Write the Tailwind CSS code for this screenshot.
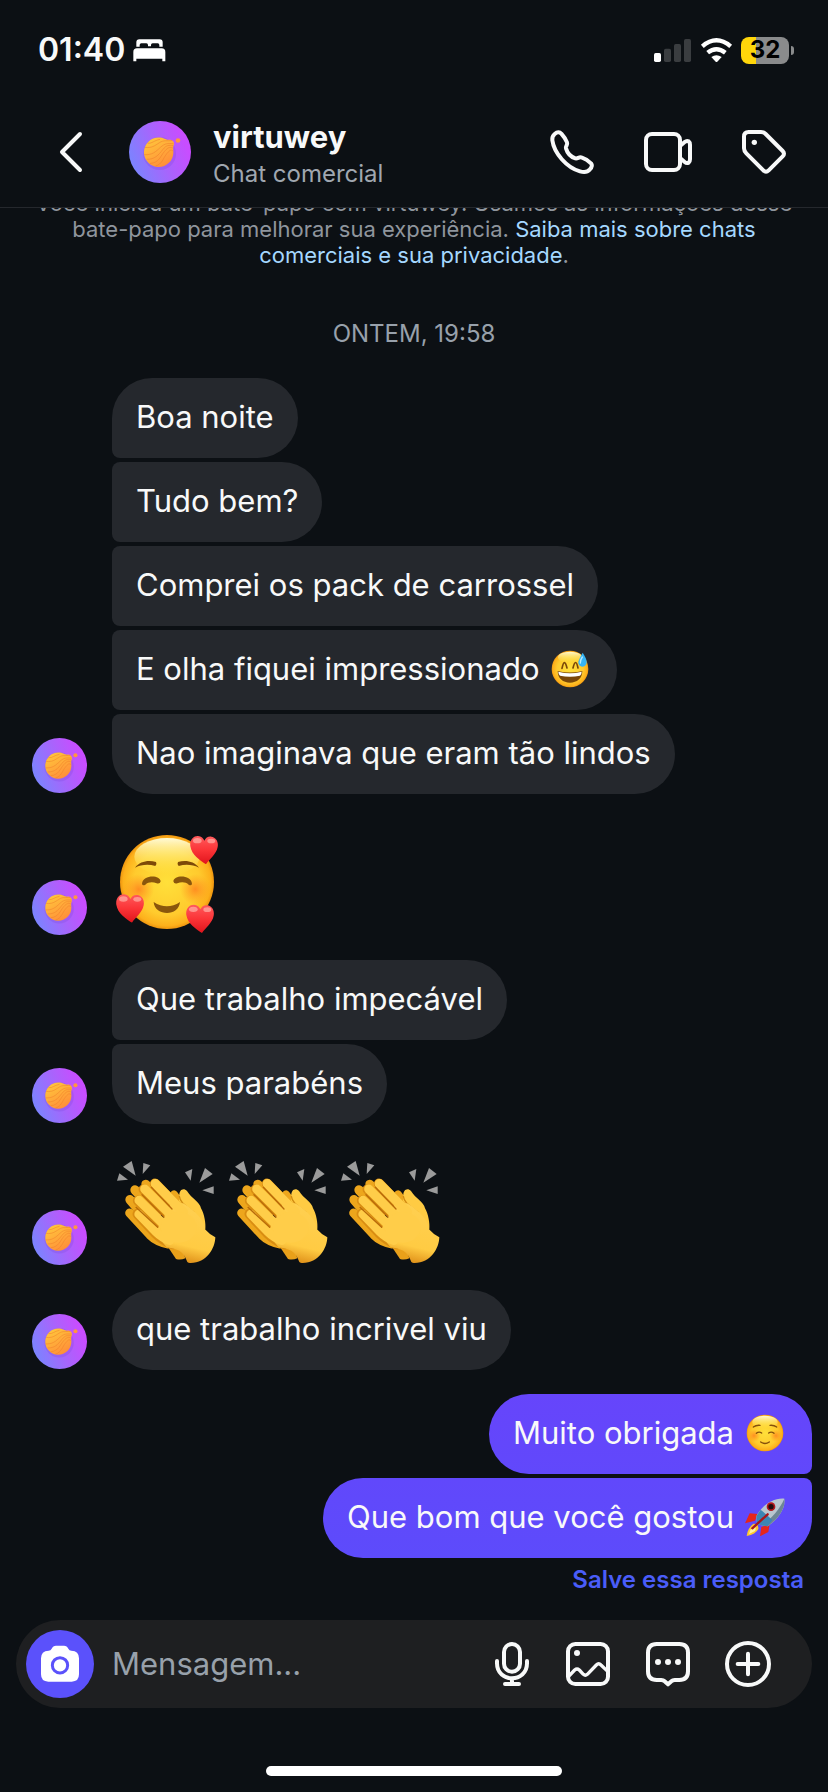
<!DOCTYPE html>
<html lang="pt-BR">
<head>
    <meta charset="UTF-8">
    <meta name="viewport" content="width=device-width, initial-scale=1.0">
    <title>virtuwey - Chat comercial</title>
    <script src="https://cdn.jsdelivr.net/npm/@tailwindcss/browser@4"></script>
</head>
<body class="flex flex-col min-h-screen bg-[#0c1014] text-[#f8f9f9] font-['Inter','Liberation_Sans',sans-serif]">

    <!-- Shared drawings -->
    <svg class="absolute size-0" aria-hidden="true">
        <defs>
            <linearGradient id="avatarBg" x1="0" y1="0.7" x2="1" y2="0.3">
                <stop offset="0" stop-color="#7886ff"/>
                <stop offset="0.5" stop-color="#a765fc"/>
                <stop offset="0.9" stop-color="#c84dff"/>
            </linearGradient>
            <linearGradient id="ball" x1="0.2" y1="0" x2="0.8" y2="1">
                <stop offset="0" stop-color="#ffc83c"/>
                <stop offset="1" stop-color="#ff8a38"/>
            </linearGradient>
            <radialGradient id="face" cx="0.5" cy="0.5" r="0.5">
                <stop offset="0" stop-color="#ffe03a"/>
                <stop offset="0.7" stop-color="#ffcb2e"/>
                <stop offset="0.93" stop-color="#fdb01b"/>
                <stop offset="1" stop-color="#ee950f"/>
            </radialGradient>
            <linearGradient id="shine" x1="0" y1="0" x2="0" y2="1">
                <stop offset="0" stop-color="#fffbd8"/>
                <stop offset="1" stop-color="#fff04a" stop-opacity="0"/>
            </linearGradient>
            <radialGradient id="blush">
                <stop offset="0" stop-color="#ff7a1c" stop-opacity="0.75"/>
                <stop offset="1" stop-color="#ff8a1c" stop-opacity="0"/>
            </radialGradient>
            <linearGradient id="heartFill" x1="0" y1="0" x2="0" y2="1">
                <stop offset="0" stop-color="#ff5a5c"/>
                <stop offset="0.5" stop-color="#fb3437"/>
                <stop offset="1" stop-color="#e0141c"/>
            </linearGradient>
            <linearGradient id="skin" gradientUnits="userSpaceOnUse" x1="270" y1="180" x2="225" y2="370">
                <stop offset="0" stop-color="#ffd052"/>
                <stop offset="0.7" stop-color="#ffcb43"/>
                <stop offset="1" stop-color="#d98410"/>
            </linearGradient>
        </defs>

        <symbol id="avatar" viewBox="99 117 162 162">
            <circle cx="180" cy="198" r="81" fill="url(#avatarBg)"/>
            <circle cx="179" cy="202" r="43" fill="#7a45d8" opacity="0.25"/>
            <path d="M177 160C190 160 194 166 203 166C212 165 219 172 216 180C213 187 215 191 215 199A38.500 38.500 0 1 1 177 160Z" fill="url(#ball)"/>
            <g fill="none" stroke="#ef7f2a" stroke-width="1.500">
                <path d="M141 186C158 188 166 182 178 174S197 170 212 168"/>
                <path d="M139 205C160 206 168 198 181 186S200 176 215 176"/>
                <path d="M145 217C166 218 176 206 187 192S203 181 214 181"/>
                <path d="M154 228C178 226 181 209 192 196S207 186 213 187"/>
                <path d="M168 235C186 230 188 214 198 202S209 193 214 195"/>
                <path d="M148 175C160 176 164 168 180 165"/>
            </g>
            <circle cx="227" cy="168" r="6" fill="#ff9540"/>
        </symbol>

        <symbol id="heart" viewBox="0 0 84 86">
            <path d="M48 86C30 74 5 58 1 32C-2 12 12 0 24 1C34 2 40 8 43 15C47 7 54 2 64 3C78 5 86 18 83 34C79 56 58 70 48 86Z" fill="url(#heartFill)"/>
            <ellipse cx="22" cy="15" rx="13" ry="8" fill="#ffb0a8" opacity="0.7"/>
            <ellipse cx="64" cy="16" rx="12" ry="7" fill="#ffb0a8" opacity="0.7"/>
        </symbol>

        <symbol id="clap" viewBox="36 24 336 354">
            <g fill="#9b9b9b">
                <path d="M58 100L84 119L51 122Z"/>
                <path d="M69 80L95 63L107 107Z"/>
                <path d="M130 69L151 76L128 102Z"/>
                <path d="M255 97L277 87L272 122Z"/>
                <path d="M315 84L338 102L298 128Z"/>
                <path d="M307 151L341 139L341 162Z"/>
            </g>
            <!-- hand behind -->
            <g stroke="#eda61c" stroke-linecap="round" fill="none">
                <path d="M137 132L200 190" stroke-width="26"/>
                <path d="M105 150L170 220" stroke-width="28"/>
                <path d="M90 179L150 250" stroke-width="28"/>
                <path d="M89 219L150 285Q170 305 205 312" stroke-width="27"/>
                <path d="M222 162L250 200" stroke-width="22"/>
            </g>
            <path d="M200 315L228 357Q242 361 256 355L245 320Z" fill="#e9a01a"/>
            <path d="M238 170C236 150 250 142 261 153C274 175 300 186 303 205C313 222 318 250 316 268L270 300L235 200Z" fill="#ffcb43"/>
            <path d="M238 168C240 190 262 200 282 217" fill="none" stroke="#d08a12" stroke-width="4"/>
            <!-- hand in front -->
            <g stroke="#d98d12" stroke-linecap="round" fill="none">
                <path d="M113 222L165 278Q190 302 218 312" stroke-width="31"/>
                <path d="M114 182L182 250" stroke-width="31"/>
                <path d="M131 148L205 222" stroke-width="31"/>
                <path d="M165 131L230 198" stroke-width="31"/>
            </g>
            <path d="M214 190L250 190C285 212 312 240 315 268Q328 283 346 292C345 325 320 369 272 369Q266 370 262 366Q254 342 238 332Q222 324 200 322L165 280Z" fill="url(#skin)"/>
            <g stroke="#ffcd49" stroke-linecap="round" fill="none">
                <path d="M116 222L168 276Q186 294 210 302" stroke-width="26"/>
                <path d="M117 181L200 262" stroke-width="27"/>
                <path d="M134 147L225 237" stroke-width="27"/>
                <path d="M166 131L250 216" stroke-width="28"/>
            </g>
            <ellipse cx="236" cy="262" rx="54" ry="46" fill="#ffcd49"/>
            <g stroke="#b86a0a" stroke-width="4" stroke-linecap="round" fill="none">
                <path d="M154 142L216 207"/>
                <path d="M126 164L192 231"/>
                <path d="M108 202L173 262"/>
            </g>
        </symbol>
    </svg>

    <!-- Status bar -->
    <div class="flex items-center justify-between h-24 pt-1 pl-[38px] pr-[34px]">
        <div class="flex items-center gap-2">
            <span class="text-[32px] font-semibold">01:40</span>
            <svg class="w-[33px] h-[23px]" viewBox="401 116 99 69" fill="#fff" aria-label="Sono">
                <path d="M411 139V126Q411 117 420 117H481Q490 117 490 126V139H480V134Q480 129 475 129H460Q455 129 455 134V138H446V134Q446 129 441 129H426Q421 129 421 134V139Z"/>
                <path d="M402 183V155Q402 144 413 144H487Q498 144 498 155V183H489V175H411V183Z"/>
            </svg>
        </div>
        <div class="flex items-center gap-2">
            <svg class="w-[39px] h-[27px]" viewBox="714 108 117 81" fill="#3a3d40" aria-label="Sinal">
                <rect x="717" y="156" width="21" height="27" rx="5" fill="#fff"/>
                <rect x="747" y="143" width="21" height="40" rx="5"/>
                <rect x="777" y="129" width="21" height="54" rx="5"/>
                <rect x="807" y="114" width="21" height="69" rx="5"/>
            </svg>
            <svg class="w-[33px] h-[27px]" viewBox="855 108 99 81" aria-label="Wi-Fi">
                <g fill="none" stroke="#fff" stroke-width="13">
                    <path d="M862 136Q904 100 947 136"/>
                    <path d="M878 155Q904 134 931 155"/>
                </g>
                <path d="M889 168Q904 157 920 168L907 182Q904 184 902 182Z" fill="#fff"/>
            </svg>
            <div class="flex items-center gap-0.5">
                <span class="flex items-center justify-center w-12 h-[27px] rounded-lg bg-linear-to-r from-[#ffd60a] from-[31%] to-[#8a8b8c] to-[31%] text-black text-2xl font-bold">32</span>
                <span class="w-[3px] h-[9px] rounded-r-full bg-[#8a8b8c]"></span>
            </div>
        </div>
    </div>

    <!-- Chat header -->
    <header class="flex items-center h-28 pl-[47px] pr-10 border-b border-[#25282d]">
        <button type="button" aria-label="Voltar" class="mr-[34px]">
            <svg class="size-12" viewBox="141 384 144 144" fill="none" stroke="#f8f9f9" stroke-width="12" stroke-linecap="round" stroke-linejoin="round">
                <path d="M240 402L186 456L240 510"/>
            </svg>
        </button>
        <svg class="size-[62px] mr-[22px]" role="img" aria-label="virtuwey"><use href="#avatar"/></svg>
        <div class="flex-1 min-w-0 pt-1">
            <h1 class="text-[31px] leading-10 font-bold">virtuwey</h1>
            <p class="text-2xl leading-[34px] text-[#a0a7b0]">Chat comercial</p>
        </div>
        <div class="flex gap-12">
            <button type="button" aria-label="Ligar">
                <svg class="size-12" viewBox="396 383 144 144" fill="none" stroke="#f8f9f9" stroke-width="12" stroke-linejoin="round">
                    <path d="M416 401C424 394 431 394 436 400C444 409 450 418 453 426C456 434 448 436 450 444C454 458 466 470 478 474C486 476 489 468 498 472C508 475 517 481 525 489C530 495 528 501 521 508C514 516 503 516 492 513C452 502 414 458 409 420C408 412 410 406 416 401Z"/>
                </svg>
            </button>
            <button type="button" aria-label="Chamada de vídeo">
                <svg class="size-12" viewBox="684 384 144 144" fill="none" stroke="#f8f9f9" stroke-width="12" stroke-linejoin="round">
                    <rect x="690" y="402" width="102" height="108" rx="18"/>
                    <path d="M793 437L806 426Q812 421 818 424Q822 427 822 434V478Q822 485 818 488Q812 491 806 486L793 475"/>
                </svg>
            </button>
            <button type="button" aria-label="Etiquetas">
                <svg class="size-12" viewBox="975 384 144 144" fill="none" stroke="#f8f9f9" stroke-width="12" stroke-linejoin="round">
                    <path d="M1001 396H1038Q1046 396 1052 402L1103 453Q1111 461 1103 469L1061 511Q1053 519 1045 511L994 460Q987 453 987 445V410Q987 396 1001 396Z"/>
                    <circle cx="1018" cy="427" r="8" fill="#f8f9f9" stroke="none"/>
                </svg>
            </button>
        </div>
    </header>

    <!-- Messages, scrolled a little under the header -->
    <main class="flex-1 overflow-hidden px-4">
        <p class="-mt-[18px] text-[22px] leading-[26px] text-center text-[#8f959d] whitespace-nowrap">
            Você iniciou um bate-papo com virtuwey. Usamos as informações desse<br>
            bate-papo para melhorar sua experiência. <a href="#" class="text-[#a5d8ff]">Saiba mais sobre chats<br>
            comerciais e sua privacidade</a>.
        </p>
        <p class="mt-[50px] mb-7 text-2xl leading-8 text-center text-[#98a1ab]">ONTEM, 19:58</p>

        <div class="flex flex-col gap-6 text-[31px] leading-10">
            <section class="flex items-end pl-4">
                <svg class="size-[56px] mr-6 pb-px pr-px" role="img" aria-label="virtuwey"><use href="#avatar"/></svg>
                <div class="flex flex-col items-start gap-1">
                    <p class="px-6 pt-[19px] pb-[21px] rounded-[40px] rounded-bl-lg bg-[#25282d]">Boa noite</p>
                    <p class="px-6 pt-[19px] pb-[21px] rounded-r-[40px] rounded-l-lg bg-[#25282d]">Tudo bem?</p>
                    <p class="px-6 pt-[19px] pb-[21px] rounded-r-[40px] rounded-l-lg bg-[#25282d]">Comprei os pack de carrossel</p>
                    <p class="flex items-center gap-2 px-6 pt-[19px] pb-[21px] rounded-r-[40px] rounded-l-lg bg-[#25282d]">
                        E olha fiquei impressionado
                        <svg class="w-[46px] h-[38px]" viewBox="240 91 138 114" role="img" aria-label="rindo com suor">
                            <circle cx="309" cy="148" r="55" fill="url(#face)"/>
                            <ellipse cx="309" cy="113" rx="36" ry="17" fill="url(#shine)"/>
                            <g fill="none" stroke="#7a4708" stroke-width="5" stroke-linecap="round">
                                <path d="M285 146Q292 112 300 145"/>
                                <path d="M318 145Q326 112 333 145"/>
                            </g>
                            <path d="M272 154Q309 163 346 154C346 176 330 189 309 189S272 176 272 154Z" fill="#7a4708"/>
                            <path d="M274 156Q309 165 344 156Q344 164 339 168Q309 174 279 168Q274 164 274 156Z" fill="#fff"/>
                            <path d="M347 99Q361 120 359 130Q356 141 345 141Q333 138 334 126Q337 116 347 99Z" fill="#35b4f4"/>
                            <path d="M346 112Q339 122 340 130" fill="none" stroke="#b5eaff" stroke-width="4" stroke-linecap="round"/>
                        </svg>
                    </p>
                    <p class="px-6 pt-[19px] pb-[21px] rounded-[40px] rounded-tl-lg bg-[#25282d]">Nao imaginava que eram tão lindos</p>
                </div>
            </section>

            <section class="flex items-end pl-4">
                <svg class="size-[56px] mr-6 pb-px pr-px" role="img" aria-label="virtuwey"><use href="#avatar"/></svg>
                <svg class="w-28 h-[118px]" viewBox="336 354 336 354" role="img" aria-label="sorrindo com corações">
                    <circle cx="501" cy="546" r="141" fill="url(#face)"/>
                    <ellipse cx="501" cy="470" rx="98" ry="56" fill="url(#shine)"/>
                    <circle cx="416" cy="568" r="46" fill="url(#blush)"/>
                    <circle cx="586" cy="568" r="46" fill="url(#blush)"/>
                    <g fill="#7d4a08">
                        <path d="M405 503C420 483 446 479 468 486Q472 493 466 498C444 492 424 494 405 503Z"/>
                        <path d="M597 503C582 483 556 479 534 486Q530 493 536 498C558 492 578 494 597 503Z"/>
                    </g>
                    <g fill="#8a560c">
                        <path d="M426 552C428 524 480 524 482 544Q480 553 470 550C458 545 444 546 436 554Q428 558 426 552Z"/>
                        <path d="M576 552C574 524 522 524 520 544Q522 553 532 550C544 545 558 546 566 554Q574 558 576 552Z"/>
                        <path d="M461 606Q501 632 540 606C538 628 520 639 501 639S462 628 461 606Z"/>
                    </g>
                    <use href="#heart" x="570" y="407" width="84" height="86"/>
                    <use href="#heart" x="348" y="582" width="84" height="86"/>
                    <use href="#heart" x="558" y="613" width="84" height="86"/>
                </svg>
            </section>

            <section class="flex items-end pl-4">
                <svg class="size-[56px] mr-6 pb-px pr-px" role="img" aria-label="virtuwey"><use href="#avatar"/></svg>
                <div class="flex flex-col items-start gap-1">
                    <p class="px-6 pt-[19px] pb-[21px] rounded-[40px] rounded-bl-lg bg-[#25282d]">Que trabalho impecável</p>
                    <p class="px-6 pt-[19px] pb-[21px] rounded-[40px] rounded-tl-lg bg-[#25282d]">Meus parabéns</p>
                </div>
            </section>

            <section class="flex items-end pl-4">
                <svg class="size-[56px] mr-6 pb-px pr-px" role="img" aria-label="virtuwey"><use href="#avatar"/></svg>
                <div class="flex" role="img" aria-label="palmas">
                    <svg class="w-28 h-[118px]"><use href="#clap"/></svg>
                    <svg class="w-28 h-[118px]"><use href="#clap"/></svg>
                    <svg class="w-28 h-[118px]"><use href="#clap"/></svg>
                </div>
            </section>

            <section class="flex items-end pl-4">
                <svg class="size-[56px] mr-6 pb-px pr-px" role="img" aria-label="virtuwey"><use href="#avatar"/></svg>
                <p class="px-6 pt-[19px] pb-[21px] rounded-[40px] bg-[#25282d]">que trabalho incrivel viu</p>
            </section>

            <section class="flex flex-col items-end gap-1">
                <p class="flex items-center gap-2 px-6 pt-[19px] pb-[21px] rounded-[40px] rounded-br-lg bg-linear-to-b from-[#6645fb] to-[#6148fb]">
                    Muito obrigada
                    <svg class="w-[46px] h-[38px]" viewBox="840 103 138 114" role="img" aria-label="sorrindo">
                        <circle cx="909" cy="160" r="55" fill="url(#face)"/>
                        <ellipse cx="909" cy="127" rx="38" ry="19" fill="url(#shine)"/>
                        <circle cx="876" cy="168" r="19" fill="url(#blush)"/>
                        <circle cx="942" cy="168" r="19" fill="url(#blush)"/>
                        <g fill="none" stroke="#86510c" stroke-width="4" stroke-linecap="round">
                            <path d="M874 142Q882 136 894 137"/>
                            <path d="M944 142Q936 136 924 137"/>
                            <path d="M883 161Q891 154 899 160"/>
                            <path d="M920 160Q928 154 936 161"/>
                            <path d="M896 187Q909 196 922 187"/>
                        </g>
                    </svg>
                </p>
                <p class="flex items-center gap-2 px-6 pt-[19px] pb-[21px] rounded-[40px] rounded-tr-lg bg-linear-to-b from-[#6148fb] to-[#5d4bfb]">
                    Que bom que você gostou
                    <svg class="w-[46px] h-[38px]" viewBox="841 353 138 114" role="img" aria-label="foguete">
                        <path d="M888 401L864 399L850 429L880 421Z" fill="#e5261c"/>
                        <path d="M924 431L920 455L895 468L899 440Z" fill="#e5261c"/>
                        <path d="M876 430Q892 430 890 446Q882 462 855 467Q858 442 876 430Z" fill="#ffc92e"/>
                        <path d="M876 438Q886 440 880 452L862 461Q866 446 876 438Z" fill="#fff3a0"/>
                        <path d="M968 355C972 385 950 415 918 438L886 432L884 408C900 376 934 352 968 355Z" fill="#b9c6cf"/>
                        <path d="M968 355C972 385 950 415 918 438L900 435C930 415 955 385 968 355Z" fill="#6d8695"/>
                        <path d="M897 388L932 419L918 438L886 432L884 408Z" fill="#3c86b4"/>
                        <path d="M918 402L872 444" stroke="#a8161a" stroke-width="7" stroke-linecap="round"/>
                        <circle cx="928" cy="379" r="13" fill="#b3161b"/>
                        <circle cx="928" cy="379" r="8" fill="#200c10"/>
                    </svg>
                </p>
                <a href="#" class="pr-2 text-2xl leading-9 font-semibold text-[#4a5df9]">Salve essa resposta</a>
            </section>
        </div>
    </main>

    <!-- Composer -->
    <footer class="px-4 pb-4">
        <form class="flex items-center gap-[18px] h-[88px] pl-[10px] pr-10 rounded-full bg-[#1e1f21]">
            <button type="button" aria-label="Câmera" class="flex items-center justify-center size-[68px] shrink-0 rounded-full bg-[#5b51fb]">
                <svg class="w-[38px] h-[38px]" viewBox="123 130 114 114">
                    <path d="M146 147Q152 147 155 141Q159 132 168 132H192Q201 132 205 141Q208 147 214 147Q237 148 237 170V218Q237 240 215 240H145Q123 240 123 218V170Q123 148 146 147Z" fill="#fff"/>
                    <circle cx="180" cy="191" r="23" fill="none" stroke="#5b51fb" stroke-width="9"/>
                </svg>
            </button>
            <input type="text" aria-label="Mensagem" placeholder="Mensagem..." class="flex-1 min-w-0 bg-transparent text-[31px] outline-none placeholder:text-[#98a1ab]">
            <div class="flex gap-8">
                <button type="button" aria-label="Gravar áudio">
                    <svg class="w-10 h-12" viewBox="156 120 120 144" fill="none" stroke="#f8f9f9" stroke-width="12" stroke-linecap="round">
                        <rect x="192" y="132" width="48" height="83" rx="24"/>
                        <path d="M171 183V190C171 250 261 250 261 190V183M216 236V250M195 252H237"/>
                    </svg>
                </button>
                <button type="button" aria-label="Galeria">
                    <svg class="size-12" viewBox="372 120 144 144" fill="none" stroke="#f8f9f9" stroke-width="12" stroke-linejoin="round">
                        <rect x="384" y="132" width="120" height="120" rx="22"/>
                        <path d="M386 229L404 210Q411 204 418 210L430 223Q436 228 442 223L469 195Q476 188 483 195L503 214" stroke-width="10"/>
                        <circle cx="411" cy="159" r="9" fill="#f8f9f9" stroke="none"/>
                    </svg>
                </button>
                <button type="button" aria-label="Respostas salvas">
                    <svg class="size-12" viewBox="612 120 144 144" fill="none" stroke="#f8f9f9" stroke-width="12" stroke-linejoin="round">
                        <path d="M650 132H718Q744 132 744 158V214Q744 240 718 240H704Q698 240 695 243L684 253L673 243Q670 240 664 240H650Q624 240 624 214V158Q624 132 650 132Z"/>
                        <g fill="#f8f9f9" stroke="none">
                            <circle cx="654" cy="186" r="9"/>
                            <circle cx="684" cy="186" r="9"/>
                            <circle cx="714" cy="186" r="9"/>
                        </g>
                    </svg>
                </button>
                <button type="button" aria-label="Mais">
                    <svg class="size-12" viewBox="852 120 144 144" fill="none" stroke="#f8f9f9" stroke-width="12" stroke-linecap="round">
                        <circle cx="924" cy="192" r="63"/>
                        <path d="M924 161V223M893 192H955"/>
                    </svg>
                </button>
            </div>
        </form>
        <div class="w-[296px] h-[10px] mx-auto mt-[58px] rounded-full bg-white"></div>
    </footer>
</body>
</html>
